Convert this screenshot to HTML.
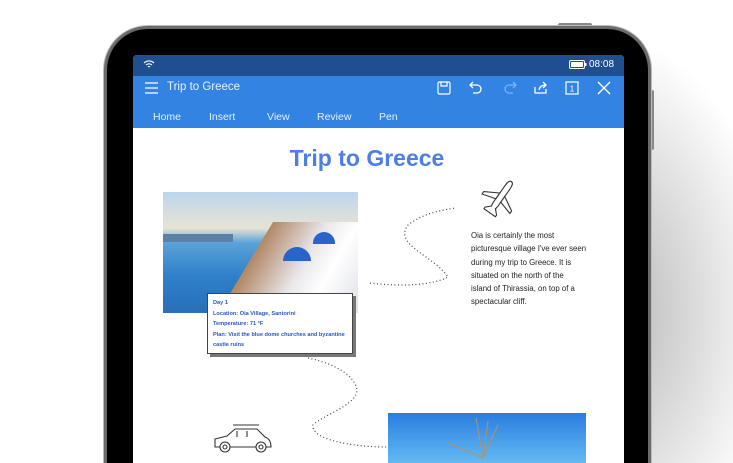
<!DOCTYPE html>
<html><head><meta charset="utf-8"><style>
*{margin:0;padding:0;box-sizing:border-box}
html,body{width:733px;height:463px;overflow:hidden;background:#fff}
#w{position:relative;width:733px;height:463px;overflow:hidden;font-family:"Liberation Sans",sans-serif}
.shadow{position:absolute;left:600px;top:30px;width:180px;height:433px;background:radial-gradient(ellipse at 0% 65%,rgba(0,0,0,.30),rgba(0,0,0,0) 70%)}
.dev{position:absolute;left:104px;top:26px;width:547px;height:437px;background:#000;border-radius:44px 44px 0 0;border:3px solid #6a6a6a;border-bottom:none;box-shadow:0 0 0 1px #bbb}
.btn{position:absolute;background:#888;border-radius:2px}
.screen{position:absolute;left:133px;top:55px;width:491px;height:408px;background:#fff;border-radius:4px 4px 0 0;overflow:hidden}
.status{height:21px;background:#1f4f8e;color:#fff;font-size:10px;position:relative}
.tool{height:52px;background:#3384e2;position:relative;color:#fff}
.ab{position:absolute}
.title{left:34px;top:5px;font-size:11.5px;color:#e8f0ff}
.tabs span{position:absolute;top:35px;font-size:10.5px;color:#e6efff}
svg{position:absolute;overflow:visible}
.h1{position:absolute;left:0;width:468px;top:90px;text-align:center;font-size:23px;font-weight:bold;color:#4d7ee8}
.p{position:absolute;left:338px;top:174px;font-size:7.8px;line-height:13.3px;color:#222;white-space:nowrap}
.card{position:absolute;left:74px;top:238px;width:146px;height:61px;background:#fff;border:1.5px solid #444;box-shadow:3px 3px 0 #777;font-size:5.6px;line-height:10.5px;color:#2a58c0;padding:4px 5px;font-weight:bold}
</style></head><body><div id="w">
<div class="shadow"></div>
<div class="btn" style="left:558px;top:23px;width:34px;height:4px"></div>
<div class="btn" style="left:650px;top:90px;width:4px;height:60px"></div>
<div class="dev"></div>
<div class="screen">
 <div class="status">
  <svg style="left:10px;top:4px" width="12" height="10" viewBox="0 0 12 10"><path d="M1 4 A7 7 0 0 1 11 4 M3 6 A4.5 4.5 0 0 1 9 6 M5 8 A1.5 1.5 0 0 1 7 8" stroke="#fff" fill="none" stroke-width="1.1"/></svg>
  <svg style="left:436px;top:5px" width="18" height="10"><rect x="0.5" y="0.5" width="15" height="8" rx="1.5" fill="none" stroke="#fff"/><rect x="2" y="2" width="12" height="5" fill="#fff"/><rect x="16" y="3" width="1.5" height="3" fill="#fff"/></svg>
  <span class="ab" style="left:456px;top:4px">08:08</span>
 </div>
 <div class="tool">
  <svg style="left:12px;top:6px" width="14" height="12"><path d="M0 1H13M0 6H13M0 11H13" stroke="#fff" stroke-width="1.3"/></svg>
  <span class="ab title">Trip to Greece</span>
  <svg style="left:304px;top:5px" width="14" height="14"><rect x="1" y="1" width="12" height="12" rx="1.5" fill="none" stroke="#fff" stroke-width="1.2"/><path d="M4 1V5H10V1" fill="none" stroke="#fff" stroke-width="1.2"/></svg>
  <svg style="left:336px;top:5px" width="14" height="14"><path d="M4 1L1 4L4 7M1 4H8A4 4 0 0 1 8 12H4" fill="none" stroke="#fff" stroke-width="1.3"/></svg>
  <svg style="left:370px;top:5px" width="14" height="14"><path d="M10 1L13 4L10 7M13 4H6A4 4 0 0 0 6 12H10" fill="none" stroke="#7fb0f0" stroke-width="1.3"/></svg>
  <svg style="left:400px;top:4px" width="15" height="15"><path d="M2 7V13H13V9M6 10Q7 5 13 5M10 2L13 5L10 8" fill="none" stroke="#fff" stroke-width="1.3"/></svg>
  <svg style="left:432px;top:5px" width="14" height="14"><rect x="1" y="1" width="12" height="12" fill="none" stroke="#fff" stroke-width="1.2"/><text x="7" y="10.5" font-size="8" fill="#fff" text-anchor="middle" font-family="Liberation Sans">1</text></svg>
  <svg style="left:464px;top:5px" width="14" height="14"><path d="M1 1L13 13M13 1L1 13" stroke="#fff" stroke-width="1.4"/></svg>
  <div class="tabs"><span style="left:20px">Home</span><span style="left:76px">Insert</span><span style="left:134px">View</span><span style="left:184px">Review</span><span style="left:246px">Pen</span></div>
 </div>
 <div class="h1">Trip to Greece</div>
 <div class="ab" style="left:30px;top:137px;width:195px;height:121px;background:linear-gradient(180deg,#bcd6ee 0%,#e7e3d4 30%,#5aa3d8 42%,#2f7fc9 70%,#2a6fb8 100%);overflow:hidden">
  <div class="ab" style="left:50px;top:30px;width:150px;height:100px;background:linear-gradient(120deg,#8a6b52 0%,#b48c6c 30%,#e8e6ea 55%,#fff 70%,#d9dbe4 100%);clip-path:polygon(40% 0,100% 0,100% 100%,0 100%)"></div>
  <div class="ab" style="left:150px;top:40px;width:22px;height:12px;border-radius:11px 11px 0 0;background:#2a64c8"></div>
  <div class="ab" style="left:120px;top:55px;width:28px;height:14px;border-radius:14px 14px 0 0;background:#2a64c8"></div>
  <div class="ab" style="left:0;top:42px;width:70px;height:8px;background:#5a80a8"></div>
 </div>
 <div class="card">Day 1<br>Location: Oia Village, Santorini<br>Temperature: 71 °F<br>Plan: Visit the blue dome churches and byzantine<br>castle ruins</div>
 <svg style="left:0;top:0" width="491" height="408">
  <path d="M237 228 C270 232 300 230 315 222 C300 200 260 190 275 170 C290 158 310 155 322 153" fill="none" stroke="#444" stroke-width="1.2" stroke-dasharray="1 2.5"/>
  <path d="M175 303 C200 308 222 320 224 335 C224 350 190 360 180 370 C178 385 220 392 254 392" fill="none" stroke="#444" stroke-width="1.2" stroke-dasharray="1 2.5"/>
  <g transform="translate(367 143) rotate(35)" fill="#fff" stroke="#333" stroke-width="1.1"><path d="M0 -20 C3 -20 3 -15 3 -12 L3 8 L2 16 L-2 16 L-3 8 L-3 -12 C-3 -15 -3 -20 0 -20Z"/><path d="M3 -4 L17 4 L17 7 L3 3Z M-3 -4 L-17 4 L-17 7 L-3 3Z M2 11 L7 16 L7 18 L-7 18 L-7 16 L-2 11"/></g>
  <g fill="#fff" stroke="#333" stroke-width="1.1"><path d="M82 392 L82 384 Q90 382 94 381 L102 374 L124 374 L132 382 Q138 384 138 392Z"/><path d="M100 370H126"/><circle cx="92" cy="392" r="5"/><circle cx="128" cy="392" r="5"/><circle cx="92" cy="392" r="2"/><circle cx="128" cy="392" r="2"/><path d="M104 376V382M114 376V382"/></g>
 </svg>
 <div class="p">Oia is certainly the most<br>picturesque village I've ever seen<br>during my trip to Greece. It is<br>situated on the north of the<br>island of Thirassia, on top of a<br>spectacular cliff.</div>
 <div class="ab" style="left:255px;top:358px;width:198px;height:70px;background:linear-gradient(180deg,#2a7de0,#5ab1f0 60%,#8cc9f2)">
  <div class="ab" style="left:90px;top:50px;width:50px;height:20px;background:#9a7650;clip-path:polygon(50% 0,100% 100%,0 100%)"></div>
  <svg style="left:0;top:0" width="198" height="50"><path d="M95 45L88 5M95 45L100 8M95 45L110 12M95 45L60 30" stroke="#b89060" stroke-width="1"/></svg>
 </div>
</div>
</div></body></html>
